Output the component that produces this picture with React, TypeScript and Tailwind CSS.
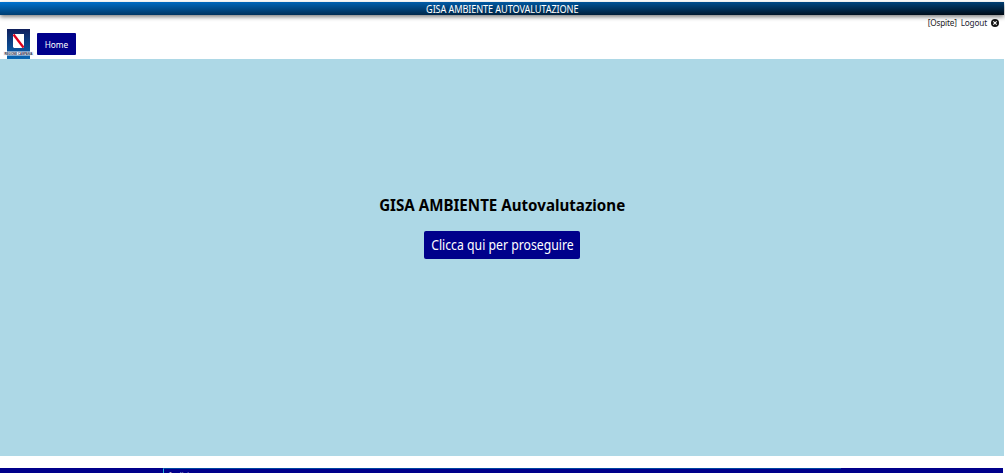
import React from "react";

function RegionLogo() {
  return (
    <svg className="block h-[30px] w-[31px]" viewBox="0 0 31 30">
      <defs>
        <linearGradient id="shield" x1="0" y1="0" x2="0" y2="1">
          <stop offset="0" stopColor="#101f5c" />
          <stop offset="1" stopColor="#0868b4" />
        </linearGradient>
      </defs>
      <rect x="4" y="0" width="23" height="30" fill="url(#shield)" />
      <path d="M10 5H21V18L20 19H11L10 18Z" fill="#fff" />
      <path d="M10.500 5.500L20.500 18.500" stroke="#e0001b" strokeWidth="2.300" />
      <rect x="0" y="22.500" width="31" height="4" fill="#f3f4fa" />
      <text x="1.500" y="26" fontSize="3.600" textLength="28" lengthAdjust="spacingAndGlyphs" fontFamily="Liberation Sans, sans-serif" fontWeight="bold" fill="#20284a">
        REGIONE CAMPANIA
      </text>
    </svg>
  );
}

function CloseIcon() {
  return (
    <svg className="block size-[8px]" viewBox="0 0 8 8">
      <circle cx="4" cy="4" r="4" fill="#151515" />
      <path d="M2.300 2.300L5.700 5.700M5.700 2.300L2.300 5.700" stroke="#fff" strokeWidth="1.100" />
    </svg>
  );
}

export default function App() {
  return (
    <div className="flex h-[473px] w-[1005px] flex-col overflow-hidden bg-white pt-[2px] font-['Noto_Sans','Open_Sans',sans-serif]">
      <header className="z-10 flex h-[13px] w-[1004px] shrink-0 items-center justify-center bg-[linear-gradient(to_bottom_right,#0073d1,#000913)] text-[10px] leading-[13px] whitespace-nowrap text-white shadow-[0_2px_4px_rgba(0,0,0,0.5)]">
        <h1 className="scale-x-[0.915] pt-[2px] tracking-[-0.12px]">GISA AMBIENTE AUTOVALUTAZIONE</h1>
      </header>
      <div className="flex h-[44px] w-[1004px] shrink-0 justify-between">
        <div className="flex pl-[3px]">
          <div className="pt-[14px]">
            <RegionLogo />
          </div>
          <nav className="pt-[18px] pl-[3px]">
            <a className="flex h-[22px] w-[39px] items-center justify-center rounded-[1px] bg-[#00008b] pt-[2px] text-[8.300px] text-white">Home</a>
          </nav>
        </div>
        <div className="flex h-[10px] items-center gap-[4px] pt-[6px] pr-[5px] text-[8.200px] leading-[10px] whitespace-nowrap text-[#222]">
          <span className="tracking-[-0.2px]">[Ospite]</span>
          <a className="tracking-[-0.15px] text-[#1c2536]">Logout</a>
          <CloseIcon />
        </div>
      </div>
      <main className="flex h-[397px] w-[1004px] shrink-0 flex-col items-center bg-[#add8e6] pt-[135px]">
        <h2 className="scale-x-[0.945] text-[16px] leading-[22px] font-bold whitespace-nowrap text-black">GISA AMBIENTE Autovalutazione</h2>
        <button className="mt-[15px] flex h-[28px] w-[156px] items-center justify-center rounded-[2px] bg-[#00008b] text-[14px] leading-[28px] whitespace-nowrap text-white">
          <span className="scale-x-[0.875]">Clicca qui per proseguire</span>
        </button>
      </main>
      <footer className="mt-[12px] flex h-[5px] w-[1003px] shrink-0 overflow-hidden bg-[#00008b]">
        <div className="ml-[163px] h-[20px] w-[678px] border-t border-l border-t-[#0046a2] border-l-[#20b4dc] pt-[2px] pl-[5px] text-[8px] leading-[10px] text-white/70">
          Indirizzo
        </div>
      </footer>
    </div>
  );
}
